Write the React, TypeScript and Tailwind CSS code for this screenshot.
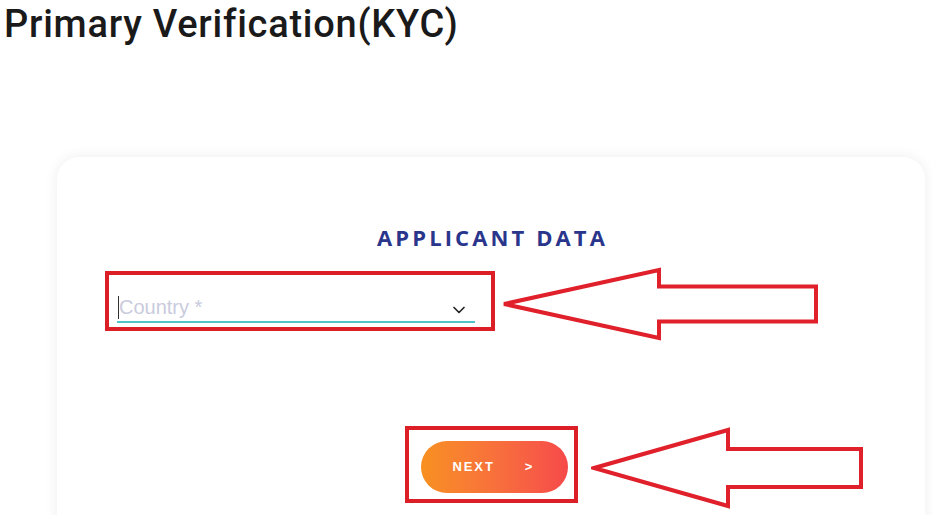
import { ChevronDown } from 'lucide-react';

// Hollow red annotation arrow pointing left
function OutlineArrow({ w, h, headW, shaftH }: { w: number; h: number; headW: number; shaftH: number }) {
  const mid = h / 2;
  const top = mid - shaftH / 2;
  const bottom = mid + shaftH / 2;
  const pts = `3,${mid} ${headW},3 ${headW},${top} ${w - 3},${top} ${w - 3},${bottom} ${headW},${bottom} ${headW},${h - 3} 3,${mid}`;
  return (
    <svg width={w} height={h} viewBox={`0 0 ${w} ${h}`} fill="none">
      <polygon points={pts} stroke="#e0202a" strokeWidth="4" strokeLinejoin="miter" fill="white" />
    </svg>
  );
}

export default function App() {
  return (
    <div className="w-[932px] h-[515px] bg-white overflow-hidden relative">
      <h1
        className="pl-[4px] pt-[3px] text-[38px] leading-[43px] font-medium text-[#1a1a1a] tracking-[0.75px]"
        style={{ fontFamily: 'Roboto, "DejaVu Sans", sans-serif' }}
      >
        Primary Verification(KYC)
      </h1>

      <div className="ml-[57px] mt-[111px] w-[868px] h-[400px] rounded-[22px] bg-white shadow-[0_0_14px_rgba(0,0,0,0.07)] flex flex-col items-center pt-[68px]">
        <h2
          className="pl-[3px] text-[22px] leading-[25px] font-bold tracking-[3.1px] text-[#2a358c]"
          style={{ fontFamily: '"Open Sans", Lato, sans-serif' }}
        >
          APPLICANT DATA
        </h2>

        <div className="self-start ml-[48px] mt-[21px] w-[390px] h-[60px] border-[4px] border-[#dc1f26] pl-[8px] pr-[16px] pt-[21px]">
          <div className="flex items-end justify-between border-b-2 border-[#52c4c9] pb-[2px] pl-[1px]">
            <div className="flex items-center">
              <span className="w-px h-[23px] bg-[#333]" />
              <span
                className="text-[20px] leading-[23px] text-[#c9cbdd]"
                style={{ fontFamily: '"Liberation Sans", Arial, sans-serif' }}
              >
                Country *
              </span>
            </div>
            <ChevronDown className="w-[20px] h-[20px] text-[#222] mr-[6px] mb-[-1px]" strokeWidth={2} />
          </div>
        </div>

        <div className="mt-[95px] w-[173px] h-[77px] border-[4px] border-[#dc1f26] flex items-center pl-[12px] pt-[4px]">
          <button
            className="w-[147px] h-[52px] rounded-full bg-gradient-to-r from-[#f8901f] to-[#f6494a] text-white text-[13px] font-bold tracking-[1.9px] flex items-center pl-[32px]"
            style={{ fontFamily: '"Liberation Sans", Arial, sans-serif' }}
          >
            <span>NEXT</span>
            <span className="ml-[30px]">&gt;</span>
          </button>
        </div>
      </div>

      {/* annotation arrows */}
      <div className="absolute left-[501px] top-[267px]">
        <OutlineArrow w={318} h={74} headW={158} shaftH={35} />
      </div>
      <div className="absolute left-[591px] top-[427px]">
        <OutlineArrow w={273} h={82} headW={137} shaftH={38} />
      </div>
    </div>
  );
}
